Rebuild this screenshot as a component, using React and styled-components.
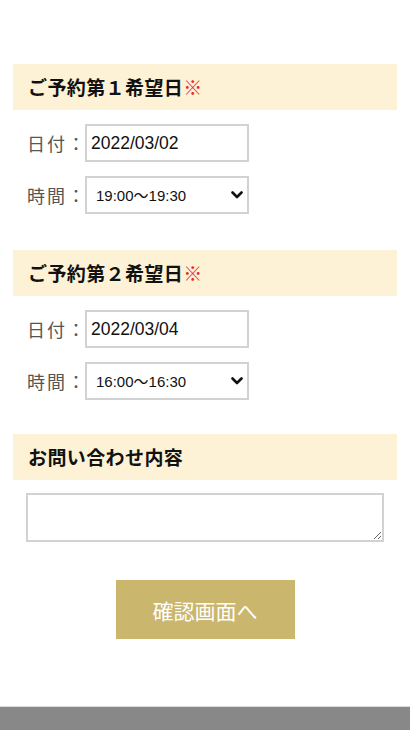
import React from "react";
import styled, { createGlobalStyle } from "styled-components";

const Global = createGlobalStyle`
  html, body { margin: 0; padding: 0; background: #fff; }
  body { font-family: "Noto Sans CJK JP", "Noto Sans", sans-serif; }
`;

const Page = styled.div`
  display: flex;
  flex-direction: column;
  min-height: 730px;
`;

const Form = styled.form`
  flex: 1;
  display: flex;
  flex-direction: column;
  padding: 64px 13px 67px;
`;

const Section = styled.section`
  display: flex;
  flex-direction: column;
  gap: ${(p) => p.$gap ?? 14}px;
  margin-bottom: ${(p) => p.$mb ?? 36}px;
`;

const Heading = styled.h2`
  margin: 0;
  background: #fdf2d5;
  height: 46px;
  line-height: 46px;
  padding: 0 15px;
  font-size: 19px;
  font-weight: 700;
  color: #111;
  letter-spacing: 0.4px;
`;

const Req = styled.span`
  color: #e52b2b;
  font-weight: 400;
`;

const Row = styled.div`
  display: flex;
  align-items: center;
  padding-left: 14px;
`;

const Label = styled.span`
  flex: 0 0 58px;
  width: 58px;
  min-width: 0;
  white-space: nowrap;
  font-size: 18px;
  line-height: 24px;
  color: #555;
  letter-spacing: 2px;
`;

const TextInput = styled.input`
  box-sizing: border-box;
  width: 164px;
  height: 38px;
  border: 2px solid #d2d2d2;
  padding: 0 4px;
  font-family: "Liberation Sans", Arial, sans-serif;
  font-size: 17.5px;
  color: #111;
  outline: none;
`;

const SelectWrap = styled.div`
  position: relative;
  width: 164px;
  height: 38px;
`;

const Select = styled.select`
  appearance: none;
  box-sizing: border-box;
  width: 100%;
  height: 100%;
  border: 2px solid #d2d2d2;
  border-radius: 0;
  background: #fff;
  padding: 0 28px 0 9px;
  font-family: "Liberation Sans", Arial, "Noto Sans CJK JP", sans-serif;
  font-size: 15px;
  color: #111;
  outline: none;
`;

const Chevron = styled.svg`
  position: absolute;
  right: 6px;
  top: 50%;
  width: 12px;
  height: 8px;
  margin-top: -4px;
  pointer-events: none;
`;

const TextArea = styled.textarea`
  box-sizing: border-box;
  margin-left: 13px;
  width: 358px;
  height: 49px;
  border: 2px solid #d2d2d2;
  font-size: 15px;
  resize: vertical;
`;

const ButtonWrap = styled.div`
  display: flex;
  justify-content: center;
`;

const Submit = styled.button`
  width: 179px;
  height: 59px;
  border: none;
  background: #cab66d;
  color: #fff;
  font-family: "Noto Sans CJK JP", sans-serif;
  font-size: 21px;
  font-weight: 400;
  cursor: pointer;
`;

const Footer = styled.footer`
  height: 23px;
  border-top: 1px solid #dadada;
  background: #888;
`;

function DateBlock({ n, date, time, options, mb }) {
  return (
    <Section $mb={mb}>
      <Heading>
        ご予約第{n}希望日<Req>※</Req>
      </Heading>
      <Row>
        <Label>日付：</Label>
        <TextInput type="text" defaultValue={date} />
      </Row>
      <Row>
        <Label>時間：</Label>
        <SelectWrap>
          <Select defaultValue={time}>
            {options.map((o) => (
              <option key={o}>{o}</option>
            ))}
          </Select>
          <Chevron viewBox="0 0 12 8">
            <path d="M1.5 1.5 L6 6 L10.5 1.5" fill="none" stroke="#111" strokeWidth="2.6" strokeLinecap="round" strokeLinejoin="round" />
          </Chevron>
        </SelectWrap>
      </Row>
    </Section>
  );
}

const times = ["10:00～10:30", "16:00～16:30", "19:00～19:30"];

export default function App() {
  return (
    <Page>
      <Global />
      <Form onSubmit={(e) => e.preventDefault()}>
        <DateBlock n="１" date="2022/03/02" time="19:00～19:30" options={times} mb={36} />
        <DateBlock n="２" date="2022/03/04" time="16:00～16:30" options={times} mb={34} />
        <Section $mb={38} $gap={13}>
          <Heading>お問い合わせ内容</Heading>
          <TextArea />
        </Section>
        <ButtonWrap>
          <Submit type="submit">確認画面へ</Submit>
        </ButtonWrap>
      </Form>
      <Footer />
    </Page>
  );
}
